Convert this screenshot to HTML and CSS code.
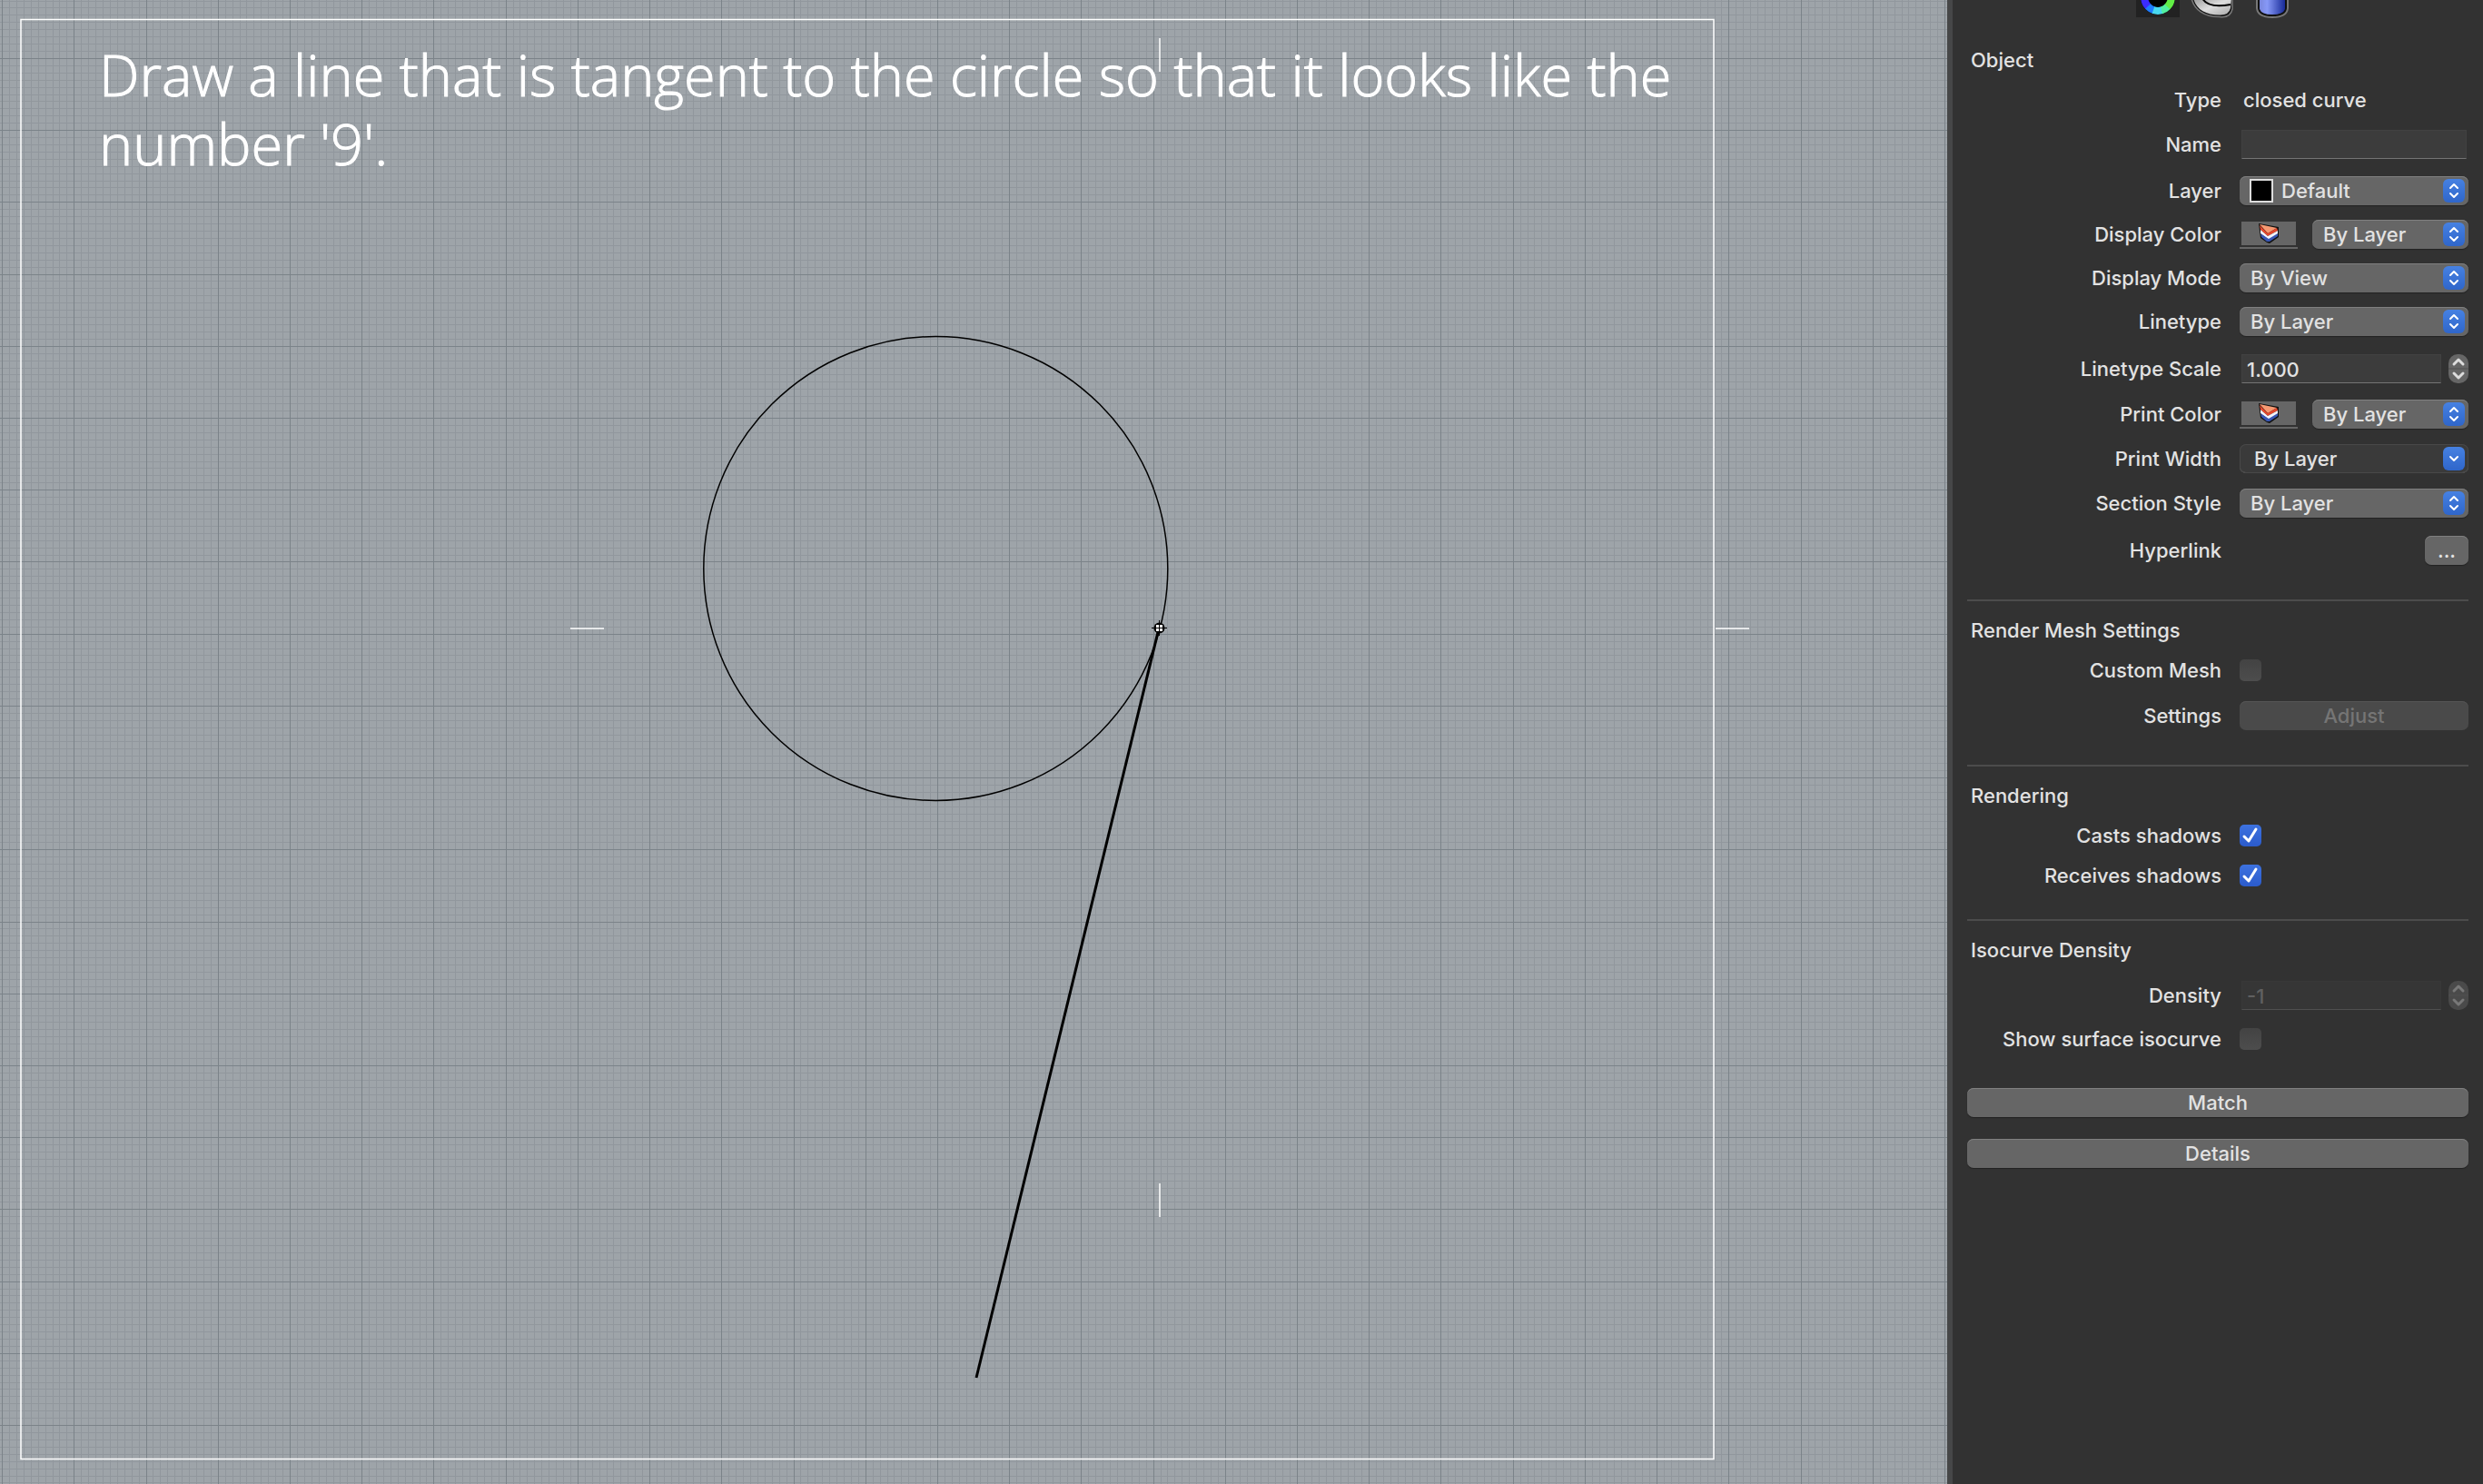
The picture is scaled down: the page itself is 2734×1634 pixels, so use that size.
FILE: index.html
```html
<!DOCTYPE html>
<html lang="en">
<head>
<meta charset="utf-8">
<title>Tangent line exercise</title>
<link rel="stylesheet" href="styles.css">
</head>
<body>
<main class="viewport">
  <svg class="drawing" viewBox="0 0 2144 1634" preserveAspectRatio="xMinYMin slice" aria-hidden="true">
    <path id="grid-minor" class="grid-minor"/>
    <path id="grid-major" class="grid-major"/>
    <path class="frame" d="M23 21.500H1887V1606.500H23Z"/>
    <path class="ticks" d="M1277 42V79M1277 1303V1340M628 692H665M1889 692H1926"/>
    <circle class="curve" cx="1030.300" cy="626" r="255.500"/>
    <path class="tangent" d="M1276 692L1075 1517"/>
    <g class="marker">
      <path d="M1268 691.500H1285M1276.500 683V700" stroke="#000" stroke-width="1"/>
      <circle cx="1276.500" cy="691.500" r="6"/>
      <path d="M1273 688h3v3h-3zM1277 688h3v3h-3zM1273 692h3v3h-3zM1277 692h3v3h-3z" fill="#fff"/>
    </g>
  </svg>
  <h1 class="prompt">Draw a line that is tangent to the circle so that it looks like the number '9'.</h1>
</main>

<aside class="panel">
  <nav class="tabs">
    <button class="tab" aria-label="Color">
      <svg width="48" height="20" viewBox="0 0 48 20"><path d="M0 0H48V19H0Z" fill="#222"/><circle cx="24" cy="-3" r="19" fill="#000"/>
        <g fill="none" stroke-width="8"><path d="M9.200 -3A14.800 14.800 0 0 0 13.500 7.500" stroke="#3b2cff"/><path d="M13 7A14.800 14.800 0 0 0 20 11.300" stroke="#1e7cff"/><path d="M19 11A14.800 14.800 0 0 0 29 11" stroke="#48d8ef"/><path d="M28 11.300A14.800 14.800 0 0 0 35 7" stroke="#52f0a0"/><path d="M34.500 7.500A14.800 14.800 0 0 0 38.800 -3" stroke="#62ee45"/></g></svg>
    </button>
    <button class="tab" aria-label="Material">
      <svg width="48" height="20" viewBox="0 0 48 20"><defs><linearGradient id="tube" x1="0" y1="0" x2="1" y2="1"><stop offset="0" stop-color="#999"/><stop offset=".5" stop-color="#ddd"/><stop offset="1" stop-color="#a8a8a8"/></linearGradient></defs>
        <path d="M-2 -2C1 11 12 18.500 29 18.500Q41 20 43 10V-2Z" fill="#111" stroke="#777" stroke-width="1.500"/><path d="M0 -2C3 10 13 16.500 29 16.500Q39 17 41 9L42 -2Z" fill="url(#tube)"/><path d="M10 -2C14 6 24 8 41 5" fill="none" stroke="#000" stroke-width="2"/></svg>
    </button>
    <button class="tab" aria-label="Texture">
      <svg width="48" height="20" viewBox="0 0 48 20"><defs><linearGradient id="cyl"><stop offset="0" stop-color="#7886dd"/><stop offset=".3" stop-color="#8799f7"/><stop offset="1" stop-color="#172a98"/></linearGradient></defs>
        <path d="M7 -2V9Q8 19 24 19T41 9V-2Z" fill="#111" stroke="#777" stroke-width="2"/><path d="M10 -2V10Q12 16 24 16T38 10V-2Z" fill="url(#cyl)"/></svg>
    </button>
  </nav>

  <section class="group group-object">
    <h2>Object</h2>
    <div class="row row-type"><span class="label">Type</span><output class="value">closed curve</output></div>
    <div class="row row-name"><label for="name">Name</label><input class="text" id="name" type="text"></div>
    <div class="row row-layer"><label for="layer">Layer</label>
      <div class="popup has-swatch"><select id="layer"><option>Default</option></select><span class="swatch"></span><svg class="cap" viewBox="0 0 24 26"><path d="M8 10l4-4 4 4M8 16l4 4 4-4"/></svg></div></div>
    <div class="row"><label for="dcolor">Display Color</label>
      <div class="pair"><button class="well" aria-label="Choose display color"><svg viewBox="0 0 22 22"><use href="#wedge"/></svg></button>
      <div class="popup"><select id="dcolor"><option>By Layer</option></select><svg class="cap" viewBox="0 0 24 26"><path d="M8 10l4-4 4 4M8 16l4 4 4-4"/></svg></div></div></div>
    <div class="row"><label for="dmode">Display Mode</label>
      <div class="popup"><select id="dmode"><option>By View</option></select><svg class="cap" viewBox="0 0 24 26"><path d="M8 10l4-4 4 4M8 16l4 4 4-4"/></svg></div></div>
    <div class="row"><label for="ltype">Linetype</label>
      <div class="popup"><select id="ltype"><option>By Layer</option></select><svg class="cap" viewBox="0 0 24 26"><path d="M8 10l4-4 4 4M8 16l4 4 4-4"/></svg></div></div>
    <div class="row row-scale"><label for="lscale">Linetype Scale</label>
      <div class="number"><input class="text" id="lscale" type="text" value="1.000"><button class="stepper" aria-label="Step linetype scale"><svg viewBox="0 0 22 32"><path d="M0 16H22" class="split"/><path d="M6 11l5-5 5 5M6 21l5 5 5-5"/></svg></button></div></div>
    <div class="row"><label for="pcolor">Print Color</label>
      <div class="pair"><button class="well" aria-label="Choose print color"><svg viewBox="0 0 22 22"><use href="#wedge"/></svg></button>
      <div class="popup"><select id="pcolor"><option>By Layer</option></select><svg class="cap" viewBox="0 0 24 26"><path d="M8 10l4-4 4 4M8 16l4 4 4-4"/></svg></div></div></div>
    <div class="row row-width"><label for="pwidth">Print Width</label>
      <div class="popup combo"><select id="pwidth"><option>By Layer</option></select><svg class="cap" viewBox="0 0 24 26"><path d="M8 11l4 4 4-4"/></svg></div></div>
    <div class="row"><label for="sstyle">Section Style</label>
      <div class="popup"><select id="sstyle"><option>By Layer</option></select><svg class="cap" viewBox="0 0 24 26"><path d="M8 10l4-4 4 4M8 16l4 4 4-4"/></svg></div></div>
    <div class="row row-button"><label for="link">Hyperlink</label><button class="push more" id="link">...</button></div>
  </section>

  <section class="group group-mesh">
    <h2>Render Mesh Settings</h2>
    <div class="row row-check"><label for="cmesh">Custom Mesh</label><input class="check" id="cmesh" type="checkbox"></div>
    <div class="row row-button"><label for="adjust">Settings</label><button class="push" id="adjust" disabled>Adjust</button></div>
  </section>

  <section class="group group-render">
    <h2>Rendering</h2>
    <div class="row row-check"><label for="casts">Casts shadows</label><input class="check" id="casts" type="checkbox" checked></div>
    <div class="row row-check"><label for="receives">Receives shadows</label><input class="check" id="receives" type="checkbox" checked></div>
  </section>

  <section class="group group-iso">
    <h2>Isocurve Density</h2>
    <div class="row row-density"><label for="density">Density</label>
      <div class="number"><input class="text" id="density" type="text" value="-1" disabled><button class="stepper" aria-label="Step density" disabled><svg viewBox="0 0 22 32"><path d="M0 16H22" class="split"/><path d="M6 11l5-5 5 5M6 21l5 5 5-5"/></svg></button></div></div>
    <div class="row row-iso"><label for="iso">Show surface isocurve</label><input class="check" id="iso" type="checkbox"></div>
  </section>

  <div class="actions">
    <button class="push">Match</button>
    <button class="push">Details</button>
  </div>
</aside>

<svg class="defs" aria-hidden="true"><defs>
  <g id="wedge">
    <path d="M0 0L22 4V15L12 22L9 21L2 16Z" fill="#111"/>
    <path d="M1 1L20 5L10 11Z" fill="#f79a72"/>
    <path d="M1 2L10 11L20 5L21 8L10 14L2 7Z" fill="#e5472c"/>
    <path d="M2 7L10 14L21 8V12L11 18L2 11Z" fill="#f4f4f8"/>
    <path d="M2 11L11 17L21 11V14L12 20L9 20L3 15Z" fill="#3856b4"/>
  </g>
</defs></svg>
<script src="grid.js"></script>
</body>
</html>
```
FILE: styles.css
```css
* { box-sizing: border-box; }

body {
  margin: 0;
  min-height: 100vh;
  display: grid;
  grid-template-columns: minmax(0, 1fr) 590px;
  background: #323232;
  color: #e2e2e2;
  font: 500 22px/28px Inter, "Liberation Sans", sans-serif;
}

button, input, select { font: inherit; color: inherit; margin: 0; }

/* Drawing area */
.viewport {
  position: relative;
  overflow: hidden;
  background: #9ea4a9;
}
.drawing {
  position: absolute;
  inset: 0;
  width: 100%;
  height: 100%;
}
.drawing path, .drawing circle { fill: none; }
.drawing .grid-minor { stroke: #91979d; stroke-width: 1; }
.drawing .grid-major { stroke: #7b8389; stroke-width: 1; }
.drawing .frame { stroke: #fff; stroke-width: 1.5; }
.drawing .ticks { stroke: #fff; stroke-width: 1.5; }
.drawing .curve { stroke: #000; stroke-width: 1.5; }
.drawing .tangent { stroke: #000; stroke-width: 3; }
.drawing .marker circle { fill: #000; }
.drawing .marker path[fill] { fill: #fff; }
.prompt {
  position: relative;
  margin: 0;
  padding: 44px 257px 0 109px;
  color: #fff;
  font: 300 63px/76px "Open Sans", "Noto Sans", sans-serif;
  -webkit-text-stroke: 1px #fff;
}

/* Properties panel */
.panel {
  border-left: 6px solid #464748;
  padding: 0 16px;
  background: #323232;
}
.tabs {
  display: flex;
  gap: 15px;
  height: 20px;
  margin-left: 186px;
}
.tab { padding: 0; border: 0; background: none; }
.tab svg { display: block; overflow: visible; }

.group {
  padding-top: 18px;
  border-bottom: 2px solid #4c4c4c;
}
.group h2 {
  margin: 0 0 8px;
  padding-left: 4px;
  font: inherit;
}
.group-object { padding: 32px 0 26px; }
.group-mesh { padding-bottom: 26px; }
.group-render { padding-bottom: 26px; }
.group-iso { padding-bottom: 34px; border: 0; }

.row {
  display: grid;
  grid-template-columns: 280px minmax(0, 1fr);
  column-gap: 20px;
  align-items: center;
  height: 48px;
}
.row > label, .row > .label { text-align: right; }
.row-type { height: 44px; }
.row-type .value { padding-left: 4px; }
.row-name { height: 56px; padding-bottom: 2px; }
.row-layer { height: 46px; padding-bottom: 2px; }
.row-scale { height: 54px; padding-top: 2px; }
.row-width { height: 50px; }
.row-button { height: 56px; }
.row-check { height: 44px; }
.row-density { height: 56px; }
.row-iso { height: 40px; }

.popup { position: relative; height: 32px; }
.popup select {
  appearance: none;
  display: block;
  width: 100%;
  height: 32px;
  padding: 0 36px 0 12px;
  border: 0;
  border-radius: 7px;
  background: #666;
  box-shadow: inset 0 1px #808080, 0 1px 1px #222;
  line-height: 28px;
}
.popup.has-swatch select { padding-left: 46px; }
.swatch {
  position: absolute;
  left: 11px;
  top: 3px;
  width: 26px;
  height: 26px;
  border: 2px solid #ddd;
  background: #000;
}
.cap {
  position: absolute;
  right: 4px;
  top: 3px;
  width: 24px;
  height: 26px;
  border-radius: 6px;
  background: linear-gradient(#4681e2, #2f66ca);
  fill: none;
  stroke: #fff;
  stroke-width: 2;
  stroke-linecap: round;
  stroke-linejoin: round;
  pointer-events: none;
}
.popup.combo select {
  padding-left: 16px;
  background: #3a3a3a;
  box-shadow: inset 0 0 0 1px #484848, inset 0 -1px #666;
}

.pair { display: grid; grid-template-columns: 64px 1fr; gap: 16px; }
.well {
  display: grid;
  place-items: center;
  height: 32px;
  padding: 0 2px;
  border: 0;
  border-bottom: 2px solid #666;
  background: linear-gradient(#666, #666) 2px 2px / 60px 26px no-repeat;
}
.well svg { width: 22px; height: 22px; }

.text {
  width: calc(100% - 4px);
  height: 32px;
  margin-left: 2px;
  padding: 2px 5px 0;
  border: 1px solid #414141;
  border-bottom: 1px solid #747474;
  background: #3c3c3c;
}
.number { display: grid; grid-template-columns: minmax(0, 1fr) 22px; gap: 6px; }
.stepper {
  height: 32px;
  padding: 0;
  border: 0;
  border-radius: 10px;
  background: #666;
}
.stepper svg {
  display: block;
  fill: none;
  stroke: #ddd;
  stroke-width: 3;
  stroke-linecap: round;
  stroke-linejoin: round;
}
.stepper .split { stroke: #505050; stroke-width: 1; }
.text:disabled { color: #606060; background: #363636; border-color: #383838; border-bottom-color: #505050; }
.stepper:disabled { background: #4a4a4a; }
.stepper:disabled svg { stroke: #787878; }

.check {
  appearance: none;
  width: 24px;
  height: 24px;
  border-radius: 5px;
  background: linear-gradient(#434343, #4d4d4d);
}
.check:checked {
  background:
    url("data:image/svg+xml,%3Csvg xmlns='http://www.w3.org/2000/svg' viewBox='0 0 24 24'%3E%3Cpath d='M5 13l5 5 8-13' fill='none' stroke='white' stroke-width='3' stroke-linecap='round' stroke-linejoin='round'/%3E%3C/svg%3E"),
    linear-gradient(#3d72e0, #2b5bcb);
}

.push {
  height: 32px;
  padding: 0;
  border: 0;
  border-radius: 7px;
  background: #666;
  box-shadow: inset 0 1px #808080, 0 1px 1px #222;
  line-height: 28px;
}
.push:disabled { color: #757575; background: #4a4a4a; box-shadow: inset 0 1px #555; }
.more { width: 48px; justify-self: end; }
.actions { display: grid; gap: 24px; }
.defs { position: absolute; width: 0; height: 0; }
```
FILE: grid.js
```js
// Construction grid: a major line every tenth minor line.
const step = 7.922;
const originX = 2.6;
const originY = 64.4 - 10 * step;
const width = 2144;
const height = 1634;
const paths = { major: "", minor: "" };

for (let i = 0; originX + i * step < width; i++) {
  const x = Math.floor(originX + i * step) + 0.5;
  paths[i % 10 ? "minor" : "major"] += `M${x} 0V${height}`;
}
for (let i = 0; originY + i * step < height; i++) {
  const y = Math.floor(originY + i * step) + 0.5;
  paths[i % 10 ? "minor" : "major"] += `M0 ${y}H${width}`;
}
document.getElementById("grid-minor").setAttribute("d", paths.minor);
document.getElementById("grid-major").setAttribute("d", paths.major);
```
